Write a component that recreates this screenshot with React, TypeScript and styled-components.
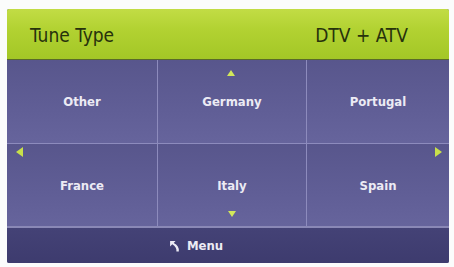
import React from 'react';
import styled, { createGlobalStyle } from 'styled-components';

const GlobalStyle = createGlobalStyle`
  html, body {
    margin: 0;
    padding: 0;
    background: #fbfcfc;
  }
`;

const Page = styled.div`
  width: 454px;
  height: 267px;
  padding: 9px 5px 4px 7px;
  box-sizing: border-box;
`;

const Screen = styled.div`
  display: flex;
  flex-direction: column;
  height: 100%;
  border-radius: 2px;
  overflow: hidden;
  background: #5b5990;
  font-family: 'DejaVu Sans Condensed', 'DejaVu Sans', sans-serif;
`;

const Header = styled.header`
  display: flex;
  justify-content: space-between;
  align-items: center;
  height: 48px;
  padding: 2px 41px 0 23px;
  background: linear-gradient(180deg, #c2dc45 0%, #b2d232 40%, #a3c726 100%);
  border-bottom: 1px solid #5a6a2a;
  color: #27320c;
  font-size: 19px;
`;

const Grid = styled.main`
  display: grid;
  grid-template-columns: 150px 148px 1fr;
  grid-template-rows: 83px 82px;
  background: #8d8bbd;
  gap: 1px;
`;

const Cell = styled.div`
  position: relative;
  display: flex;
  align-items: center;
  justify-content: center;
  background: linear-gradient(180deg, #58568c 0%, #605e96 60%, #66649c 100%);
  color: #ecebf4;
  font-size: 13px;
  font-weight: bold;
`;

const Arrow = styled.span<{ $dir: 'up' | 'down' | 'left' | 'right' }>`
  position: absolute;
  width: 0;
  height: 0;
  border-style: solid;
  ${p =>
    p.$dir === 'up'
      ? 'top: 10px; left: 50%; margin-left: -5px; border-width: 0 4px 6px 4px; border-color: transparent transparent #d2e85a transparent;'
      : p.$dir === 'down'
      ? 'bottom: 9px; left: 50%; margin-left: -4px; border-width: 6px 4px 0 4px; border-color: #d2e85a transparent transparent transparent;'
      : p.$dir === 'left'
      ? 'top: 3px; left: 9px; border-width: 5px 7px 5px 0; border-color: transparent #c8e04a transparent transparent;'
      : 'top: 3px; right: 7px; border-width: 5px 0 5px 7px; border-color: transparent transparent transparent #c8e04a;'}
`;

const Footer = styled.footer`
  flex: 1;
  display: flex;
  align-items: center;
  justify-content: center;
  gap: 6px;
  padding-right: 64px;
  border-top: 2px solid #8a88b6;
  background: linear-gradient(180deg, #444276 0%, #3d3b6e 100%);
  color: #ecebf4;
  font-size: 13px;
  font-weight: bold;
`;

const BackIcon = () => (
  <svg width="12" height="12" viewBox="0 0 11 11">
    <path d="M1 1 L6 1 L4.3 2.7 Q9.5 5 9 10.5 L6.8 10.5 Q7.2 6.5 3 4 L1 6 Z" fill="#ecebf4" />
  </svg>
);

const rows: { name: string; arrow?: 'up' | 'down' | 'left' | 'right' }[] = [
  { name: 'Other' },
  { name: 'Germany', arrow: 'up' },
  { name: 'Portugal' },
  { name: 'France', arrow: 'left' },
  { name: 'Italy', arrow: 'down' },
  { name: 'Spain', arrow: 'right' },
];

const App: React.FC = () => (
  <>
    <GlobalStyle />
    <Page>
      <Screen>
        <Header>
          <span>Tune Type</span>
          <span>DTV + ATV</span>
        </Header>
        <Grid>
          {rows.map(r => (
            <Cell key={r.name}>
              {r.arrow && <Arrow $dir={r.arrow} />}
              {r.name}
            </Cell>
          ))}
        </Grid>
        <Footer>
          <BackIcon />
          <span>Menu</span>
        </Footer>
      </Screen>
    </Page>
  </>
);

export default App;
